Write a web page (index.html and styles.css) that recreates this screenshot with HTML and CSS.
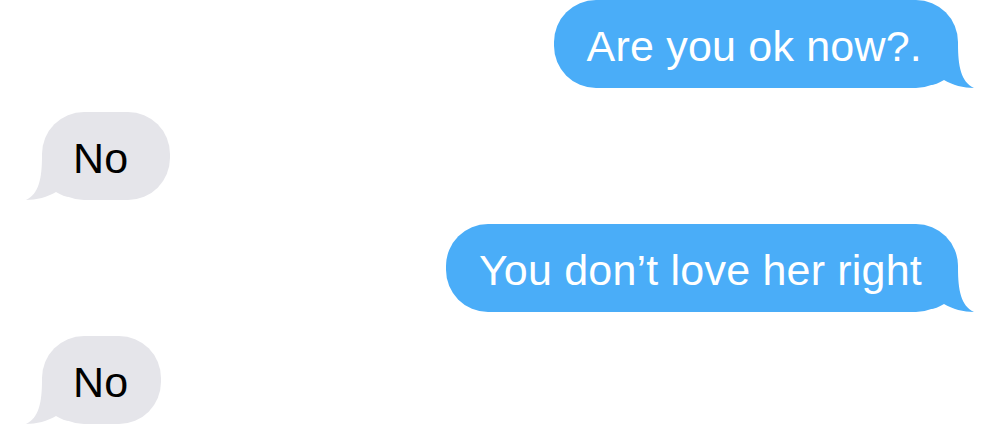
FILE: index.html
```html
<!DOCTYPE html>
<html lang="en">

<head>
    <meta charset="UTF-8">
    <meta name="viewport" content="width=device-width, initial-scale=1.0">
    <title>Messages</title>
    <link rel="stylesheet" href="styles.css">
</head>

<body>
    <div class="thread">
        <div class="msg sent">
            Are you ok now?.
            <svg class="tail" viewBox="0 0 46 44"><path d="M0 0H28C28 22 31 38 44 44C34 44 22 41 14 36C9 39 4 41 0 41Z" /></svg>
        </div>
        <div class="msg received">
            No
            <svg class="tail" viewBox="0 0 46 44"><path d="M0 0H28C28 22 31 38 44 44C34 44 22 41 14 36C9 39 4 41 0 41Z" /></svg>
        </div>
        <div class="msg sent">
            You don’t love her right
            <svg class="tail" viewBox="0 0 46 44"><path d="M0 0H28C28 22 31 38 44 44C34 44 22 41 14 36C9 39 4 41 0 41Z" /></svg>
        </div>
        <div class="msg received short">
            No
            <svg class="tail" viewBox="0 0 46 44"><path d="M0 0H28C28 22 31 38 44 44C34 44 22 41 14 36C9 39 4 41 0 41Z" /></svg>
        </div>
    </div>
</body>

</html>
```

FILE: styles.css
```css
* {
    box-sizing: border-box;
}

body {
    margin: 0;
    background-color: #FFFFFF;
    font-family: 'Liberation Sans', Arial, sans-serif;
}

.thread {
    display: flex;
    flex-direction: column;
    gap: 24px;
    padding: 0 42px;
}

.msg {
    position: relative;
    height: 88px;
    padding: 6px 36px 2px 33px;
    line-height: 80px;
    font-size: 43px;
    letter-spacing: 0.2px;
    border-radius: 42px;
    white-space: nowrap;
}

.sent {
    align-self: flex-end;
    background-color: #4AADF8;
    color: #FFFFFF;
}

.received {
    align-self: flex-start;
    background-color: #E5E5EA;
    color: #000000;
    padding: 6px 42px 2px 31px;
}

.received.short {
    padding-right: 33px;
}

/* tail drawn from the bottom corner of the bubble */
.tail {
    position: absolute;
    bottom: 0;
    width: 46px;
    height: 44px;
}

.sent .tail {
    right: -18px;
    fill: #4AADF8;
}

.received .tail {
    left: -18px;
    fill: #E5E5EA;
    transform: scaleX(-1);
}
```
